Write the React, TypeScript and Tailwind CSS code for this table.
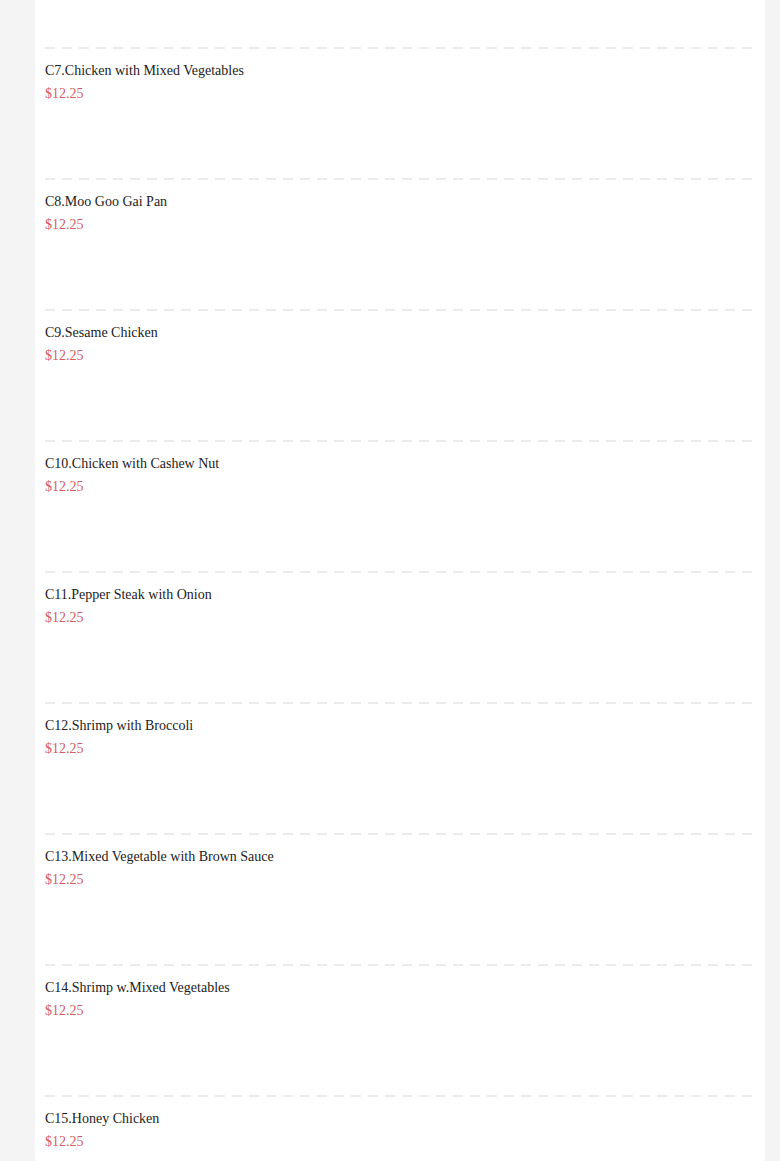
const items = [
  "C7.Chicken with Mixed Vegetables",
  "C8.Moo Goo Gai Pan",
  "C9.Sesame Chicken",
  "C10.Chicken with Cashew Nut",
  "C11.Pepper Steak with Onion",
  "C12.Shrimp with Broccoli",
  "C13.Mixed Vegetable with Brown Sauce",
  "C14.Shrimp w.Mixed Vegetables",
  "C15.Honey Chicken",
];

function Divider() {
  return (
    <div className="h-[2px] w-full bg-[repeating-linear-gradient(to_right,#ebebeb_0px,#ebebeb_10px,transparent_10px,transparent_17px)]" />
  );
}

export default function App() {
  return (
    <div className="min-h-[1161px] bg-[#f4f4f4] pl-[35px] pr-[15px] font-['Liberation_Serif',serif]">
      <div className="h-[1161px] overflow-hidden bg-white px-[10px]">
        <div className="h-[47px]" />
        {items.map((name) => (
          <div key={name}>
            <Divider />
            <div className="h-[129px] pt-[12px]">
              <div className="text-[14px] leading-[20px] text-[#222]">{name}</div>
              <div className="mt-[3px] text-[14px] leading-[20px] text-[#d65c60]">$12.25</div>
            </div>
          </div>
        ))}
      </div>
    </div>
  );
}
